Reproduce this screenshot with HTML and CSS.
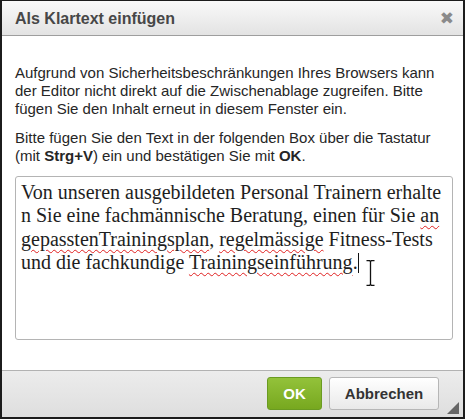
FILE: index.html
```html
<!DOCTYPE html>
<html lang="de">
<head>
    <meta charset="UTF-8">
    <meta name="viewport" content="width=device-width, initial-scale=1.0">
    <title>Als Klartext einfügen</title>
    <link rel="stylesheet" href="styles.css">
</head>
<body>
    <div class="dialogo">
        <div class="titulo">
            <span class="titulo_texto">Als Klartext einfügen</span>
            <span class="cerrar">&#10006;</span>
        </div>
        <div class="contenido">
            <p>Aufgrund von Sicherheitsbeschränkungen Ihres Browsers kann der Editor nicht direkt auf die Zwischenablage zugreifen. Bitte fügen Sie den Inhalt erneut in diesem Fenster ein.</p>
            <p>Bitte fügen Sie den Text in der folgenden Box über die Tastatur (mit <b>Strg+V</b>) ein und bestätigen Sie mit <b>OK</b>.</p>
            <div class="caja">
                <div class="texto">Von unseren ausgebildeten Personal Trainern erhalte<br>n Sie eine fachmännische Beratung, einen für Sie <span class="error">an</span><br><span class="error">gepasstenTrainingsplan</span>, <span class="error">regelmässige</span> Fitness-Tests<br>und die fachkundige <span class="error">Trainingseinführung</span>.<span class="caret"></span></div>
                <svg class="cursor" width="9" height="26" viewBox="0 0 9 26">
                    <path d="M0.5 0.5 H3.5 L4.5 1.5 L5.5 0.5 H8.5 M4.5 1.5 V24.5 M0.5 25.5 H3.5 L4.5 24.5 L5.5 25.5 H8.5" stroke="#111" stroke-width="1.3" fill="none"/>
                </svg>
            </div>
        </div>
        <div class="pie">
            <button class="boton boton_ok">OK</button>
            <button class="boton boton_cancelar">Abbrechen</button>
            <span class="agarre"></span>
        </div>
    </div>
</body>
</html>
```

FILE: styles.css
```css
html{
    font-family: Arial, "Liberation Sans", sans-serif;
    background: #fff;
}

body{
    margin: 0;
}

.dialogo{
    width: 465px;
    height: 419px;
    box-sizing: border-box;
    border: 2px solid #1c1c1c;
    border-top-width: 1px;
    display: flex;
    flex-direction: column;
    background: #fff;
}

.titulo{
    height: 34px;
    flex-shrink: 0;
    display: flex;
    align-items: center;
    justify-content: space-between;
    padding: 0 9px 0 13px;
    background: linear-gradient(to bottom, #f9f9f9, #e3e3e3);
    border-bottom: 1px solid #9e9e9e;
}

.titulo_texto{
    font-size: 16px;
    font-weight: bold;
    color: #474747;
    padding-top: 1px;
}

.cerrar{
    font-size: 17px;
    color: #8a8a8a;
    font-family: "DejaVu Sans", sans-serif;
    font-weight: bold;
}

.contenido{
    flex: 1;
    padding: 28px 10px 0 13px;
    font-size: 15px;
    color: #262626;
}

.contenido p{
    margin: 0 0 11px 0;
    line-height: 18px;
}

.caja{
    position: relative;
    margin-top: 9px;
    height: 154px;
    border: 1px solid #b4b4b4;
    border-radius: 3px;
    padding: 4px 5px;
}

.texto{
    font-family: "Liberation Serif", "Times New Roman", serif;
    font-size: 20px;
    line-height: 23.3px;
    color: #1e1e1e;
    white-space: nowrap;
}

.error{
    text-decoration: underline wavy #e02020;
    text-decoration-thickness: 1px;
    text-underline-offset: 3px;
}

.caret{
    display: inline-block;
    width: 1px;
    height: 20px;
    background: #111;
    vertical-align: -4px;
}

.cursor{
    position: absolute;
    left: 350px;
    top: 83px;
}

.pie{
    height: 47px;
    flex-shrink: 0;
    position: relative;
    display: flex;
    justify-content: flex-end;
    align-items: flex-start;
    gap: 7px;
    padding: 6px 24px 0 0;
    box-sizing: border-box;
    background: linear-gradient(to bottom, #ececec, #dedede);
    border-top: 1px solid #b2b2b2;
}

.boton{
    height: 33px;
    box-sizing: border-box;
    font-family: Arial, "Liberation Sans", sans-serif;
    font-size: 15px;
    font-weight: bold;
    color: #333;
    padding: 0 13px;
    border: 1px solid #b6b6b6;
    border-radius: 3px;
    background: linear-gradient(to bottom, #ffffff, #e9e9e9);
}

.boton_ok{
    width: 55px;
    color: #fff;
    border-color: #6a9b21;
    background: linear-gradient(to bottom, #93c23a, #77a81f);
}

.boton_cancelar{
    width: 110px;
}

.agarre{
    position: absolute;
    right: 4px;
    bottom: 3px;
    width: 0;
    height: 0;
    border-left: 12px solid transparent;
    border-bottom: 12px solid #666;
}
```
